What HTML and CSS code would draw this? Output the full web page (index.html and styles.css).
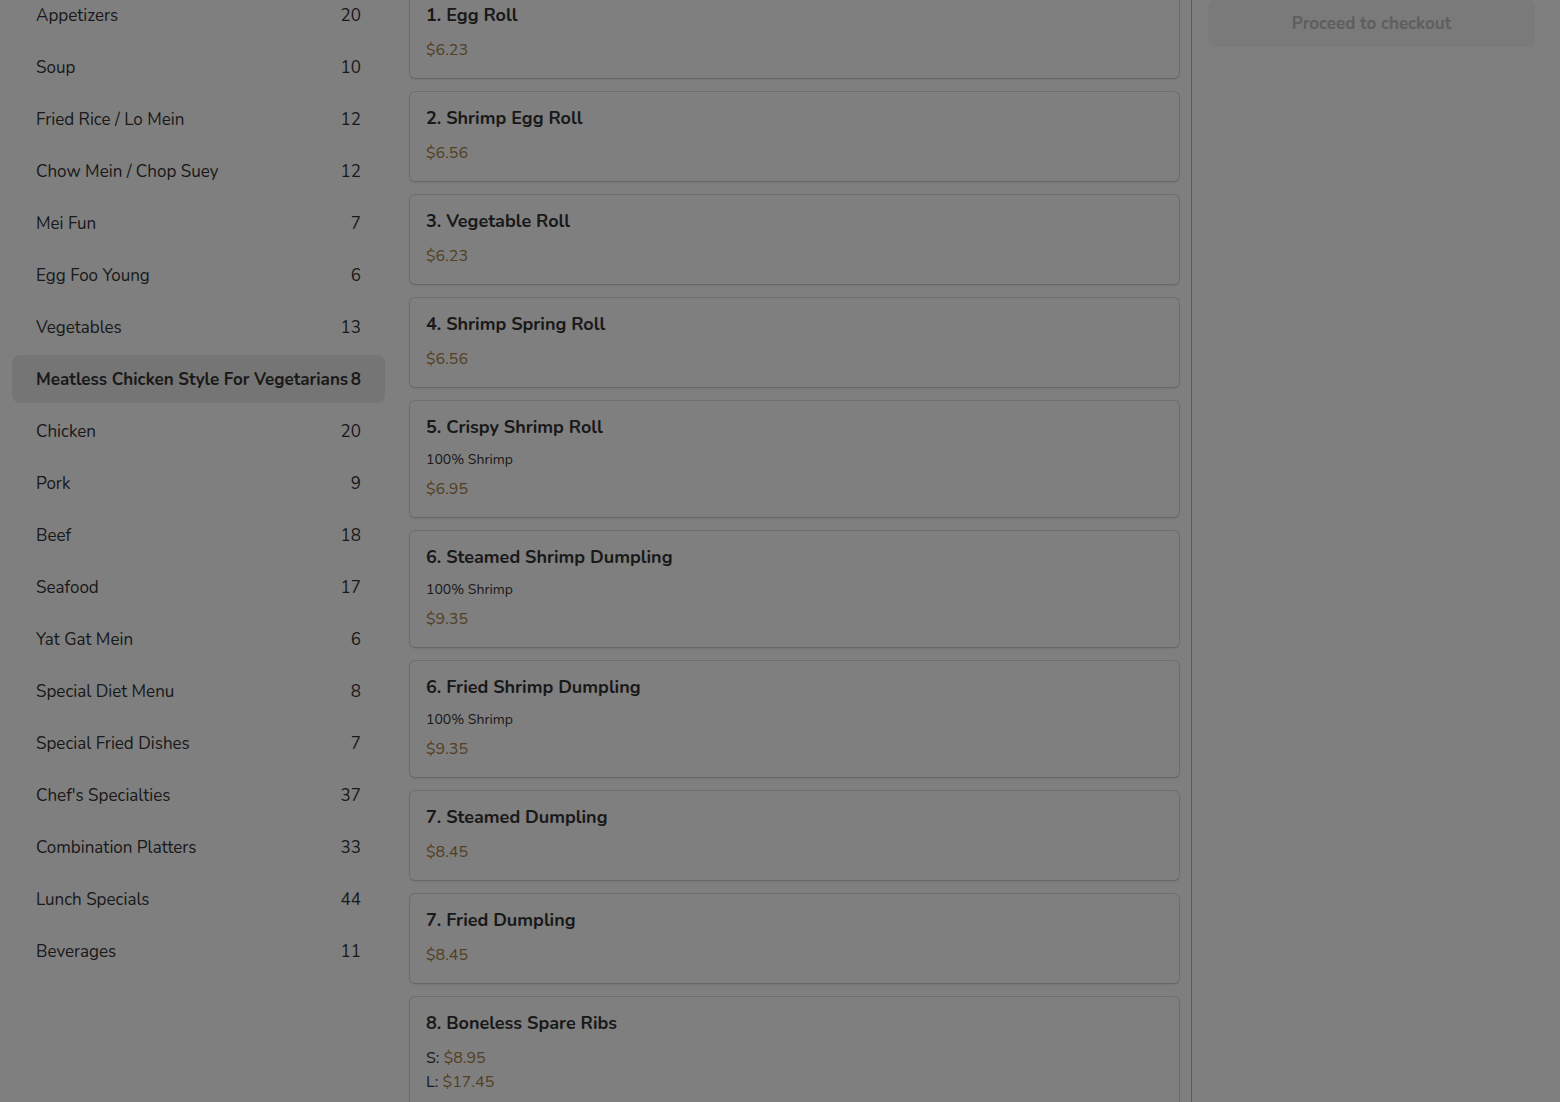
FILE: index.html
```html
<!DOCTYPE html>
<html lang="en">
<head>
<meta charset="utf-8">
<title>Menu</title>
<link rel="stylesheet" href="styles.css">
</head>
<body>
<div class="page">
  <nav class="sidebar">
    <ul class="cat-list">
      <li class="cat"><span>Appetizers</span><span>20</span></li>
      <li class="cat"><span>Soup</span><span>10</span></li>
      <li class="cat"><span>Fried Rice / Lo Mein</span><span>12</span></li>
      <li class="cat"><span>Chow Mein / Chop Suey</span><span>12</span></li>
      <li class="cat"><span>Mei Fun</span><span>7</span></li>
      <li class="cat"><span>Egg Foo Young</span><span>6</span></li>
      <li class="cat"><span>Vegetables</span><span>13</span></li>
      <li class="cat active"><span>Meatless Chicken Style For Vegetarians</span><span>8</span></li>
      <li class="cat"><span>Chicken</span><span>20</span></li>
      <li class="cat"><span>Pork</span><span>9</span></li>
      <li class="cat"><span>Beef</span><span>18</span></li>
      <li class="cat"><span>Seafood</span><span>17</span></li>
      <li class="cat"><span>Yat Gat Mein</span><span>6</span></li>
      <li class="cat"><span>Special Diet Menu</span><span>8</span></li>
      <li class="cat"><span>Special Fried Dishes</span><span>7</span></li>
      <li class="cat"><span>Chef's Specialties</span><span>37</span></li>
      <li class="cat"><span>Combination Platters</span><span>33</span></li>
      <li class="cat"><span>Lunch Specials</span><span>44</span></li>
      <li class="cat"><span>Beverages</span><span>11</span></li>
    </ul>
  </nav>

  <main class="items">
    <div class="card"><div class="title">1. Egg Roll</div><div class="price">$6.23</div></div>
    <div class="card"><div class="title">2. Shrimp Egg Roll</div><div class="price">$6.56</div></div>
    <div class="card"><div class="title">3. Vegetable Roll</div><div class="price">$6.23</div></div>
    <div class="card"><div class="title">4. Shrimp Spring Roll</div><div class="price">$6.56</div></div>
    <div class="card"><div class="title">5. Crispy Shrimp Roll</div><div class="desc">100% Shrimp</div><div class="price">$6.95</div></div>
    <div class="card"><div class="title">6. Steamed Shrimp Dumpling</div><div class="desc">100% Shrimp</div><div class="price">$9.35</div></div>
    <div class="card"><div class="title">6. Fried Shrimp Dumpling</div><div class="desc">100% Shrimp</div><div class="price">$9.35</div></div>
    <div class="card"><div class="title">7. Steamed Dumpling</div><div class="price">$8.45</div></div>
    <div class="card"><div class="title">7. Fried Dumpling</div><div class="price">$8.45</div></div>
    <div class="card"><div class="title">8. Boneless Spare Ribs</div>
      <div class="price"><span class="size">S:</span> $8.95</div>
      <div class="price"><span class="size">L:</span> $17.45</div>
    </div>
  </main>

  <aside class="cart">
    <button class="checkout" type="button">Proceed to checkout</button>
  </aside>
</div>
<div class="backdrop"></div>
</body>
</html>
```

FILE: styles.css
```css
* { box-sizing: border-box; }

html, body {
  margin: 0;
  padding: 0;
  height: 100%;
  overflow: hidden;
  background: #ffffff;
  font-family: "Nunito", "Lato", "Open Sans", sans-serif;
  color: #333333;
}

.page {
  display: grid;
  grid-template-columns: 373px 806px 369px;
  padding-left: 12px;
  margin-top: -12px;
}

.sidebar {
  padding-top: 3px;
}

.cat-list {
  list-style: none;
  margin: 0;
  padding: 0;
  display: flex;
  flex-direction: column;
  gap: 4px;
}

.cat {
  height: 48px;
  display: flex;
  align-items: center;
  justify-content: space-between;
  gap: 2px;
  padding: 0 24px;
  border-radius: 8px;
  font-size: 17px;
  white-space: nowrap;
  color: #333333;
}

.cat.active {
  background: #ebebeb;
  font-weight: 700;
}

.items {
  width: 771px;
  margin-left: 24px;
  margin-right: 11px;
  display: flex;
  flex-direction: column;
  gap: 12px;
}

.card {
  border: 1px solid #dadada;
  border-bottom-color: #cfcfcf;
  border-radius: 6px;
  padding: 14px 16px 16px;
  box-shadow: 0 1px 2px rgba(0,0,0,0.08);
}

.title {
  font-size: 18px;
  font-weight: 700;
  line-height: 24px;
  margin-bottom: 11px;
}

.desc {
  font-size: 14px;
  line-height: 20px;
  margin-bottom: 7px;
}

.price {
  font-size: 16px;
  line-height: 24px;
  color: #a58048;
}

.price .size {
  color: #333333;
}

.cart {
  border-left: 1px solid #b6b6b6;
  min-height: 1200px;
  padding: 11px 25px 0 16px;
}

.checkout {
  width: 100%;
  height: 48px;
  border: none;
  border-radius: 8px;
  background: #f5f5f5;
  color: #bcbcbc;
  font-family: inherit;
  font-size: 17px;
  font-weight: 700;
}

.backdrop {
  position: fixed;
  inset: 0;
  background: rgba(0, 0, 0, 0.5);
}
```
